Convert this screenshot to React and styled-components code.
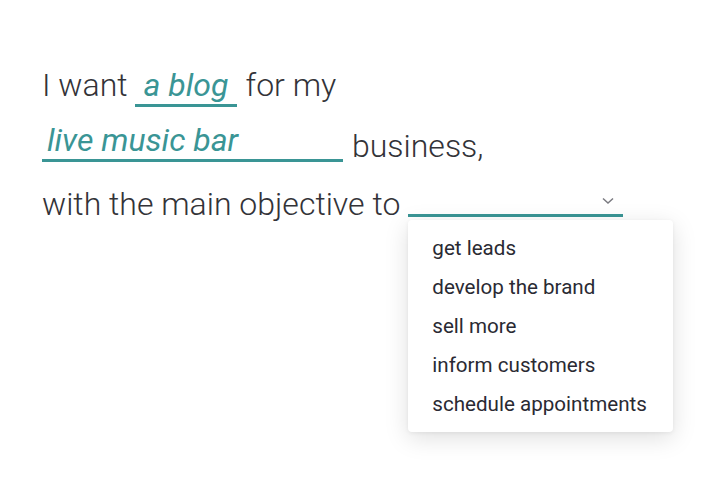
import React from 'react'
import styled, { createGlobalStyle } from 'styled-components'

const GlobalStyle = createGlobalStyle`
	html, body {
		margin: 0;
		padding: 0;
		background: #ffffff;
	}
	body {
		font-family: Roboto, 'Liberation Sans', sans-serif;
	}
`

const teal = '#3a9595'

const Page = styled.div`
	width: 718px;
	height: 491px;
	box-sizing: border-box;
	padding: 66px 0 0 42px;
	color: #333338;
`

const Row = styled.div`
	display: flex;
	align-items: ${props => props.$align || 'flex-end'};
	${props => props.$height && `height: ${props.$height}px`};
`

const Word = styled.span`
	font-size: 32px;
	line-height: 38px;
	font-weight: 300;
	white-space: nowrap;
	${props => props.$left && `margin-left: ${props.$left}px`};
`

const Field = styled.span`
	display: inline-block;
	box-sizing: border-box;
	width: ${props => props.$width}px;
	padding-left: ${props => props.$pad || 0}px;
	border-bottom: 3px solid ${teal};
	font-size: 32px;
	line-height: 38px;
	font-style: italic;
	font-weight: 400;
	color: ${teal};
	white-space: nowrap;
	${props => props.$left && `margin-left: ${props.$left}px`};
	${props => props.$lift && `margin-bottom: ${props.$lift}px`};
`

const SelectWrap = styled.div`
	position: relative;
	margin-left: 8px;
	margin-bottom: 6px;
`

const SelectBox = styled.div`
	display: flex;
	align-items: center;
	justify-content: flex-end;
	box-sizing: border-box;
	width: 215px;
	height: 30px;
	padding-right: 9px;
	border-bottom: 3px solid ${teal};
	color: #7a7a80;
`

const Menu = styled.ul`
	position: absolute;
	top: calc(100% + 3px);
	left: 0;
	width: 265px;
	margin: 0;
	padding: 8px 0 9px;
	list-style: none;
	background: #ffffff;
	border-radius: 4px;
	box-shadow: 0 6px 24px rgba(0, 0, 0, 0.13), 0 1px 4px rgba(0, 0, 0, 0.06);
`

const MenuItem = styled.li`
	height: 39px;
	display: flex;
	align-items: center;
	padding-left: 24px;
	font-size: 20.6px;
	font-weight: 400;
	color: #2a2a33;
	white-space: nowrap;
`

const Chevron = () => (
	<svg width="12" height="8" viewBox="0 0 12 8" fill="none">
		<path d="M1 1.5 L6 6 L11 1.5" stroke="currentColor" strokeWidth="1.5" />
	</svg>
)

const objectives = [
	'get leads',
	'develop the brand',
	'sell more',
	'inform customers',
	'schedule appointments'
]

export default function App() {
	return (
		<Page>
			<GlobalStyle />
			<Row $align="baseline">
				<Word>I want</Word>
				<Field $width={102} $pad={9} $left={7}>
					a blog
				</Field>
				<Word $left={9}>for my</Word>
			</Row>
			<Row $height={58}>
				<Field $width={301} $pad={5} $lift={3}>
					live music bar
				</Field>
				<Word $left={9}>business,</Word>
			</Row>
			<Row $height={58}>
				<Word>with the main objective to</Word>
				<SelectWrap>
					<SelectBox>
						<Chevron />
					</SelectBox>
					<Menu>
						{objectives.map(item => (
							<MenuItem key={item}>{item}</MenuItem>
						))}
					</Menu>
				</SelectWrap>
			</Row>
		</Page>
	)
}
